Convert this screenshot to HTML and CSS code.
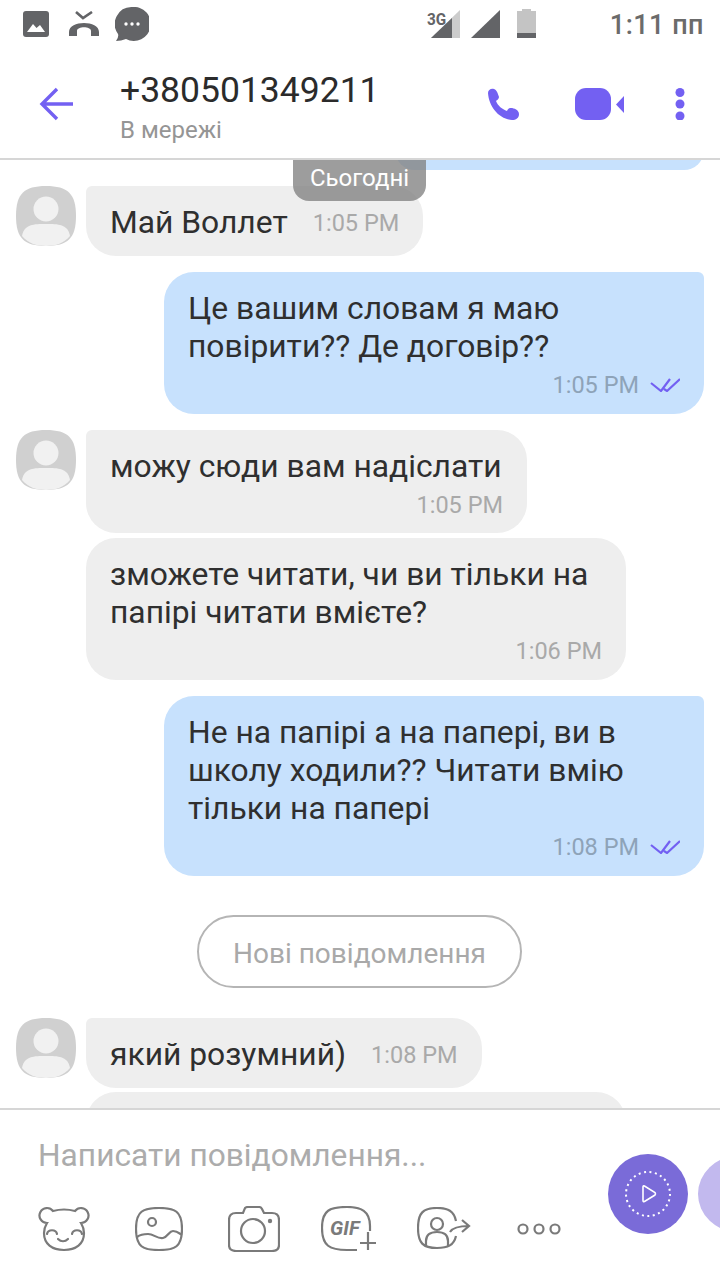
FILE: index.html
```html
<!DOCTYPE html>
<html lang="uk">
<head>
    <meta charset="UTF-8">
    <meta name="viewport" content="width=device-width, initial-scale=1.0">
    <title>Viber</title>
    <link rel="stylesheet" href="styles.css">
</head>
<body>
    <div class="phone">
        <div class="statusbar">
            <div class="status-left">
                <svg class="st-photo" width="26" height="26" viewBox="0 0 26 26"><rect width="26" height="26" rx="3" fill="#636467"/><path d="M4 21 L10 13 L13.5 17 L17 14 L22 21 Z" fill="#fff"/></svg>
                <svg class="st-call" width="32" height="30" viewBox="0 0 32 30"><path d="M8 1 L15 7 L24 1" fill="none" stroke="#636467" stroke-width="2.6"/><path d="M1 25 V21 C1 9 31 9 31 21 V25 H23 V20 C23 15 9 15 9 20 V25 Z" fill="#636467"/></svg>
                <svg class="st-msg" width="34" height="34" viewBox="0 0 34 34"><path d="M17 0 A17 17 0 1 1 11 32 Q6 34 1 34 Q4 30 3 27 A17 17 0 0 1 17 0 Z" fill="#636467"/><circle cx="11" cy="17" r="1.7" fill="#fff"/><circle cx="17" cy="17" r="1.7" fill="#fff"/><circle cx="23" cy="17" r="1.7" fill="#fff"/></svg>
            </div>
            <div class="status-right">
                <div class="signal-3g">
                    <span class="net-label">3G</span>
                    <svg width="30" height="30" viewBox="0 0 30 30"><path d="M0 29 L29 1 V29 Z" fill="#ccc"/><path d="M0 29 L21 9 V29 Z" fill="#636467"/></svg>
                </div>
                <svg class="signal" width="29" height="30" viewBox="0 0 29 30"><path d="M0 29 L29 1 V29 Z" fill="#636467"/></svg>
                <svg class="battery" width="19" height="30" viewBox="0 0 19 30"><path d="M5 0 H14 V2 H19 V29 H0 V2 H5 Z" fill="#c4c4c4"/><rect y="24" width="19" height="5" fill="#636467"/></svg>
                <span class="clock">1:11 пп</span>
            </div>
        </div>

        <div class="header">
            <svg class="back" width="36" height="34" viewBox="0 0 36 34"><path d="M34 17 H3 M18 2 L3 17 L18 32" fill="none" stroke="#7360f2" stroke-width="3.4"/></svg>
            <div class="contact">
                <div class="contact-name">+380501349211</div>
                <div class="contact-state">В мережі</div>
            </div>
            <div class="header-actions">
                <svg class="h-phone" width="34" height="33" viewBox="0 0 34 33"><path d="M1 5 C1 2 4 0 7 1 C10 2 11 6 12 9 C12 11 10 12 9 13 C11 18 15 21 20 23 C21 21 22 20 24 20 C27 20 32 22 32 26 C32 30 29 32 25 32 C12 31 2 19 1 5 Z" fill="#7360f2"/></svg>
                <svg class="h-video" width="50" height="32" viewBox="0 0 50 32"><rect width="36" height="32" rx="11" fill="#7360f2"/><path d="M49 8 V25 L41 16.5 Z" fill="#7360f2"/></svg>
                <svg class="h-more" width="10" height="32" viewBox="0 0 10 32"><circle cx="5" cy="4.5" r="4.5" fill="#7360f2"/><circle cx="5" cy="16" r="4.5" fill="#7360f2"/><circle cx="5" cy="28" r="4.5" fill="#7360f2"/></svg>
            </div>
        </div>

        <div class="chat">
            <div class="date-pill">Сьогодні</div>

            <div class="row row-out first"><div class="bubble out stub"></div></div>

            <div class="row row-in">
                <svg class="avatar" width="60" height="60" viewBox="0 0 60 60"><path d="M30 0 C52 0 60 8 60 30 C60 52 52 60 30 60 C8 60 0 52 0 30 C0 8 8 0 30 0 Z" fill="#d0d0d0"/><circle cx="30" cy="23" r="12.5" fill="#f1f1f1"/><path d="M6 50 C8 38 18 38 30 38 C42 38 52 38 54 50 C48 57 40 60 30 60 C20 60 12 57 6 50 Z" fill="#f1f1f1"/></svg>
                <div class="bubble in inline">
                    <span class="text">Май Воллет</span>
                    <span class="time">1:05 PM</span>
                </div>
            </div>

            <div class="row row-out">
                <div class="bubble out">
                    <div class="text">Це вашим словам я маю<br>повірити?? Де договір??</div>
                    <div class="meta"><span class="time">1:05 PM</span><svg class="ticks" width="30" height="14" viewBox="0 0 30 14"><path d="M1 5 L11 13 L20 1 M14 11 L17 13 L30 1" fill="none" stroke="#7360f2" stroke-width="2.2"/></svg></div>
                </div>
            </div>

            <div class="row row-in">
                <svg class="avatar" width="60" height="60" viewBox="0 0 60 60"><path d="M30 0 C52 0 60 8 60 30 C60 52 52 60 30 60 C8 60 0 52 0 30 C0 8 8 0 30 0 Z" fill="#d0d0d0"/><circle cx="30" cy="23" r="12.5" fill="#f1f1f1"/><path d="M6 50 C8 38 18 38 30 38 C42 38 52 38 54 50 C48 57 40 60 30 60 C20 60 12 57 6 50 Z" fill="#f1f1f1"/></svg>
                <div class="bubble in short">
                    <div class="text">можу сюди вам надіслати</div>
                    <div class="meta"><span class="time">1:05 PM</span></div>
                </div>
            </div>

            <div class="row row-in cont">
                <div class="bubble in wide">
                    <div class="text">зможете читати, чи ви тільки на<br>папірі читати вмієте?</div>
                    <div class="meta"><span class="time">1:06 PM</span></div>
                </div>
            </div>

            <div class="row row-out">
                <div class="bubble out">
                    <div class="text">Не на папірі а на папері, ви в<br>школу ходили?? Читати вмію<br>тільки на папері</div>
                    <div class="meta"><span class="time">1:08 PM</span><svg class="ticks" width="30" height="14" viewBox="0 0 30 14"><path d="M1 5 L11 13 L20 1 M14 11 L17 13 L30 1" fill="none" stroke="#7360f2" stroke-width="2.2"/></svg></div>
                </div>
            </div>

            <div class="new-wrap"><div class="new-pill">Нові повідомлення</div></div>

            <div class="row row-in">
                <svg class="avatar" width="60" height="60" viewBox="0 0 60 60"><path d="M30 0 C52 0 60 8 60 30 C60 52 52 60 30 60 C8 60 0 52 0 30 C0 8 8 0 30 0 Z" fill="#d0d0d0"/><circle cx="30" cy="23" r="12.5" fill="#f1f1f1"/><path d="M6 50 C8 38 18 38 30 38 C42 38 52 38 54 50 C48 57 40 60 30 60 C20 60 12 57 6 50 Z" fill="#f1f1f1"/></svg>
                <div class="bubble in inline">
                    <span class="text">який розумний)</span>
                    <span class="time">1:08 PM</span>
                </div>
            </div>

            <div class="row row-in tail">
                <div class="bubble in wide tail-bubble"></div>
            </div>
        </div>

        <div class="composer">
            <div class="placeholder">Написати повідомлення...</div>
            <div class="tools">
                <svg width="52" height="46" viewBox="0 0 52 46" class="tool"><g fill="none" stroke="#7a7a7a" stroke-width="2.2" stroke-linecap="round"><path d="M9 17 A7.5 7.5 0 1 1 15 5 Q26 2 37 5 A7.5 7.5 0 1 1 43 17 Q46 22 46 27 C46 38 38 44 26 44 C14 44 6 38 6 27 Q6 22 9 17 Z"/><path d="M9 28 C10 23 18 23 19 28 M34 28 C35 23 43 23 44 28 M20 33 C23 36 27 36 30 33"/></g></svg>
                <svg width="48" height="44" viewBox="0 0 48 44" class="tool"><g fill="none" stroke="#7a7a7a" stroke-width="2.2"><path d="M24 1 C40 1 47 4 47 22 C47 40 40 43 24 43 C8 43 1 40 1 22 C1 4 8 1 24 1 Z"/><circle cx="17" cy="15" r="4"/><path d="M2 30 C6 27 9 27 13 27 C19 27 22 32 28 31 C33 30 34 24 38 24 C42 24 44 26 47 28"/></g></svg>
                <svg width="52" height="46" viewBox="0 0 52 46" class="tool"><g fill="none" stroke="#7a7a7a" stroke-width="2.2"><path d="M8 7 H15 L17 2 Q18 1 20 1 H31 Q33 1 34 3 L36 7 H44 Q51 7 51 14 V39 Q51 45 44 45 H8 Q1 45 1 39 V14 Q1 7 8 7 Z"/><circle cx="25" cy="25" r="12"/></g><circle cx="42" cy="15" r="2.2" fill="#7a7a7a"/></svg>
                <div class="gif">
                    <svg width="55" height="46" viewBox="0 0 55 46"><g fill="none" stroke="#7a7a7a" stroke-width="2.2"><path d="M49 25 V20 C49 5 40 1 26 1 C9 1 1 4 1 22 C1 40 9 44 26 44 H36"/><path d="M39 37 H55 M47 26 V44"/></g></svg>
                    <span class="gif-label">GIF</span>
                </div>
                <svg class="tool share" width="54" height="44" viewBox="0 0 54 44"><g fill="none" stroke="#7a7a7a" stroke-width="2.2"><path d="M39 14 C37 4 31 1 20 1 C6 1 1 6 1 21 C1 36 6 41 20 41 C31 41 37 38 39 29"/><circle cx="20" cy="17" r="6"/><path d="M9 40 V34 C9 27 14 25 20 25 C26 25 31 27 31 34 V40"/><path d="M33 25 C36 20 43 19 52 19 M45 13 L52 19 L45 25"/></g></svg>
                <svg class="tool dots" width="44" height="12" viewBox="0 0 44 12"><g fill="none" stroke="#7a7a7a" stroke-width="2.2"><circle cx="6" cy="6" r="4.5"/><circle cx="22" cy="6" r="4.5"/><circle cx="38" cy="6" r="4.5"/></g></svg>
            </div>
            <div class="btn-play">
                <svg width="48" height="48" viewBox="0 0 48 48"><circle cx="24" cy="24" r="22" fill="none" stroke="#fff" stroke-width="2" stroke-dasharray="2 3.5"/><path d="M19 17 Q19 15.5 20.5 16 L31 22.5 Q32 24 31 25 L20.5 31.5 Q19 32 19 30.5 Z" fill="none" stroke="#fff" stroke-width="1.6"/></svg>
            </div>
            <div class="btn-second"></div>
        </div>
    </div>
</body>
</html>
```

FILE: styles.css
```css
html, body {
    margin: 0;
    padding: 0;
}
body {
    font-family: Roboto, "Noto Sans", sans-serif;
    background-color: #fff;
}
.phone {
    width: 720px;
    height: 1280px;
    display: flex;
    flex-direction: column;
    overflow: hidden;
}
.statusbar {
    height: 50px;
    flex-shrink: 0;
    display: flex;
    justify-content: space-between;
    padding: 7px 16px 0 23px;
    box-sizing: border-box;
}
.status-left {
    display: flex;
    align-items: flex-start;
}
.st-photo {
    margin-top: 4px;
}
.st-call {
    margin: 4px 0 0 19px;
}
.st-msg {
    margin-left: 15px;
}
.status-right {
    display: flex;
    align-items: flex-start;
}
.signal-3g {
    display: flex;
    align-items: flex-start;
    margin-top: 2px;
}
.net-label {
    font-size: 17px;
    font-weight: 700;
    color: #636467;
    width: 20px;
    margin-left: 3px;
    margin-right: -16px;
    transform: scaleX(0.9);
    transform-origin: left;
}
.signal {
    margin: 2px 0 0 10px;
}
.battery {
    margin: 2px 0 0 17px;
}
.clock {
    font-size: 27px;
    font-weight: 500;
    color: #6b6b6b;
    margin-left: 74px;
    letter-spacing: 0.5px;
    line-height: 36px;
}
.header {
    height: 110px;
    flex-shrink: 0;
    box-sizing: border-box;
    border-bottom: 2px solid #d6d6d6;
    display: flex;
    align-items: flex-start;
    padding-left: 39px;
}
.back {
    margin-top: 37px;
}
.contact {
    margin-left: 45px;
    margin-top: 18px;
}
.contact-name {
    font-size: 35.5px;
    line-height: 44px;
    color: #2b2b2b;
}
.contact-state {
    font-size: 24px;
    line-height: 30px;
    color: #959595;
    margin-top: 3px;
}
.header-actions {
    margin-left: auto;
    margin-right: 35px;
    margin-top: 38px;
    display: flex;
    align-items: flex-start;
}
.h-phone {
    margin-right: 54px;
}
.h-video {
    margin-right: 50px;
}
.chat {
    flex: 1;
    position: relative;
    overflow: hidden;
    min-height: 0;
}
.date-pill {
    position: absolute;
    top: 0;
    left: 293px;
    width: 133px;
    height: 41px;
    box-sizing: border-box;
    padding-top: 4px;
    background-color: rgba(130, 130, 130, 0.78);
    border-radius: 0 0 16px 16px;
    color: #fff;
    font-size: 24px;
    line-height: 28px;
    text-align: center;
    z-index: 2;
}
.row {
    display: flex;
    margin-top: 16px;
}
.row-in {
    padding-left: 16px;
    align-items: flex-start;
}
.row-out {
    justify-content: flex-end;
    padding-right: 16px;
}
.row.first {
    margin-top: -30px;
}
.row.cont {
    margin-top: 5px;
    padding-left: 86px;
}
.row.tail {
    margin-top: 4px;
    padding-left: 86px;
}
.avatar {
    margin-right: 10px;
    flex-shrink: 0;
}
.bubble {
    box-sizing: border-box;
    border-radius: 30px;
    font-size: 31.8px;
    line-height: 38px;
    color: #2f2f2f;
    white-space: nowrap;
}
.bubble.in {
    background-color: #eeeeee;
    border-top-left-radius: 6px;
    padding: 17px 24px 11px;
}
.row.cont .bubble.in,
.row.tail .bubble.in {
    border-top-left-radius: 30px;
}
.bubble.out {
    width: 540px;
    background-color: #c7e1fd;
    border-top-right-radius: 6px;
    padding: 17px 24px 11px;
}
.bubble.stub {
    height: 40px;
    padding: 0;
    width: 309px;
    border-radius: 30px;
}
.bubble.inline {
    height: 70px;
    display: flex;
    align-items: center;
    padding: 1px 24px 0;
    gap: 25px;
}
.bubble.inline .time {
    margin-top: 2px;
}
.bubble.short {
    width: 441px;
    height: 103px;
}
.bubble.wide {
    width: 540px;
}
.tail-bubble {
    height: 60px;
}
.meta {
    display: flex;
    justify-content: flex-end;
    align-items: center;
    height: 38px;
    padding-top: 1px;
    box-sizing: border-box;
}
.time {
    font-size: 23.5px;
    color: #a9a9a9;
    line-height: 30px;
}
.bubble.out .time {
    color: #8ea3b8;
}
.ticks {
    margin-left: 11px;
}
.new-wrap {
    display: flex;
    justify-content: center;
    margin-top: 39px;
    margin-bottom: 30px;
}
.new-pill {
    box-sizing: border-box;
    width: 325px;
    height: 73px;
    margin-left: -1px;
    border: 2px solid #b5b5b5;
    border-radius: 37px;
    color: #a9a9a9;
    font-size: 28px;
    line-height: 73px;
    text-align: center;
}
.new-wrap + .row {
    margin-top: 0;
}
.composer {
    height: 172px;
    flex-shrink: 0;
    box-sizing: border-box;
    border-top: 2px solid #d6d6d6;
    position: relative;
    background-color: #fff;
    padding: 27px 0 0 38px;
}
.placeholder {
    font-size: 31.7px;
    line-height: 38px;
    color: #acacac;
}
.tools {
    display: flex;
    align-items: center;
    margin-top: 31px;
    height: 46px;
}
.tool {
    flex-shrink: 0;
}
.tools > * {
    margin-right: 45px;
}
.gif {
    position: relative;
    width: 55px;
    height: 46px;
    margin-left: -4px;
}
.gif-label {
    position: absolute;
    left: 9px;
    top: 10px;
    font-size: 20px;
    line-height: 24px;
    font-weight: 700;
    font-style: italic;
    color: #7a7a7a;
}
.tools > .share {
    margin-left: -4px;
}
.tools > .dots {
    margin-left: 1px;
}
.btn-play {
    position: absolute;
    left: 608px;
    top: 44px;
    width: 80px;
    height: 80px;
    border-radius: 50%;
    background-color: #7a6bd8;
    display: flex;
    align-items: center;
    justify-content: center;
}
.btn-second {
    position: absolute;
    left: 698px;
    top: 46px;
    width: 80px;
    height: 76px;
    border-radius: 50%;
    background-color: #c2b9ee;
}
```
